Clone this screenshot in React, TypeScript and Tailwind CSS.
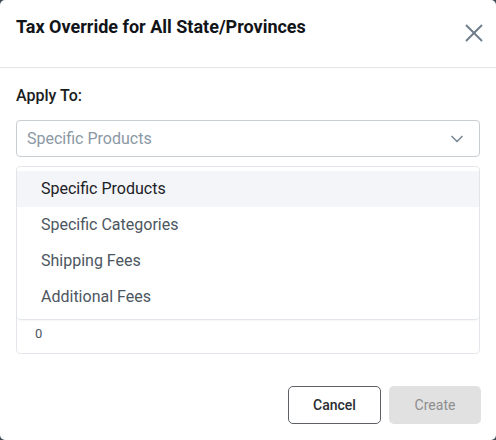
import { X, ChevronDown } from 'lucide-react';

const options = ['Specific Products', 'Specific Categories', 'Shipping Fees', 'Additional Fees'];

const App = () => {
  return (
    <div className="w-[496px] h-[440px] bg-[#3b4650]" style={{ fontFamily: 'Roboto, "Liberation Sans", sans-serif' }}>
      <div className="w-full h-full bg-white rounded-[5px] flex flex-col">
        {/* Header */}
        <div className="h-[68px] border-b border-[#e3e5e8] flex items-start justify-between pl-4 pr-[7px]">
          <h2 className="mt-[14px] text-[18px] font-bold text-[#111418] leading-[26px]">
            Tax Override for All State/Provinces
          </h2>
          <button className="mt-[18px] text-[#6e7d89]" aria-label="Close">
            <X className="h-[30px] w-[30px]" strokeWidth={1.5} />
          </button>
        </div>

        {/* Body */}
        <div className="px-4 pt-[18px]">
          <div className="text-[16px] font-medium text-[#1a1d21] leading-[20px]">Apply To:</div>

          <div className="mt-[14px] h-[37px] border border-[#c9ced3] rounded-[4px] flex items-center justify-between pl-[10px] pr-[12px]">
            <span className="text-[16px] text-[#8b98a4]">Specific Products</span>
            <ChevronDown className="h-[20px] w-[20px] text-[#7d8b96]" strokeWidth={2} />
          </div>

          <div className="mt-[9px] border border-[#e3e6ea] rounded-[4px]">
            <div className="border-b border-[#e3e6ea] rounded-[4px] py-[4px] shadow-[0_1px_2px_rgba(0,0,0,0.04)]">
              {options.map((opt, i) => (
                <div
                  key={opt}
                  className={`h-[36px] flex items-center pl-[24px] text-[16px] ${
                    i === 0 ? 'bg-[#f4f5f9] text-[#1c2126]' : 'text-[#4c5661]'
                  }`}
                >
                  {opt}
                </div>
              ))}
            </div>
            <div className="h-[33px] flex items-start pt-[4px] pl-[18px] text-[13px] text-[#4c5661]">0</div>
          </div>
        </div>

        {/* Footer */}
        <div className="mt-auto mb-[16px] px-[15px] flex justify-end gap-[8px]">
          <button className="w-[93px] h-[38px] border border-[#5d6166] rounded-[5px] text-[14px] font-medium text-[#2a2d31]">
            Cancel
          </button>
          <button className="w-[92px] h-[38px] bg-[#e1e1e1] rounded-[5px] text-[14px] text-[#8d8d8d]" disabled>
            Create
          </button>
        </div>
      </div>
    </div>
  );
};

export default App;
